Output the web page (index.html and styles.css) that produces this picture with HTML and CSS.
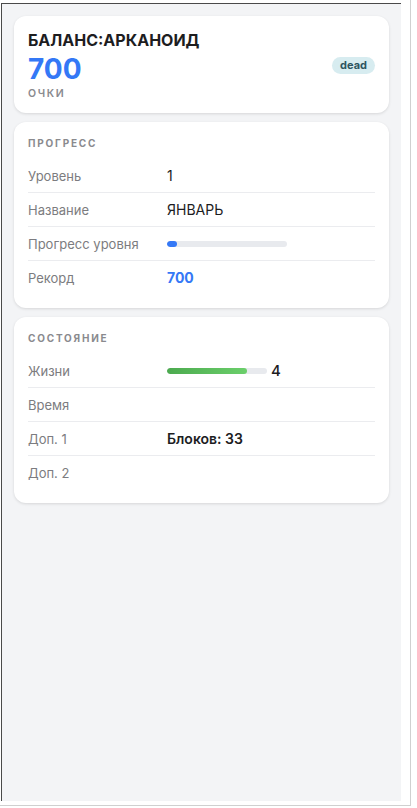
FILE: index.html
```html
<!DOCTYPE html>
<html lang="ru">
<head>
    <meta charset="UTF-8">
    <meta name="viewport" content="width=device-width, initial-scale=1.0">
    <title>Баланс: Арканоид</title>
    <link rel="stylesheet" href="styles.css">
</head>
<body>
    <div class="frame">
        <div class="screen">
            <!-- Шапка -->
            <div class="card hero">
                <div class="hero-main">
                    <div class="hero-title">БАЛАНС:АРКАНОИД</div>
                    <div class="hero-score">700</div>
                    <div class="hero-caption">ОЧКИ</div>
                </div>
                <span class="badge">dead</span>
            </div>

            <!-- Прогресс -->
            <div class="card">
                <div class="section-title">ПРОГРЕСС</div>
                <div class="row">
                    <span class="label">Уровень</span>
                    <span class="value">1</span>
                </div>
                <div class="row">
                    <span class="label">Название</span>
                    <span class="value">ЯНВАРЬ</span>
                </div>
                <div class="row">
                    <span class="label">Прогресс уровня</span>
                    <span class="value">
                        <span class="bar"><span class="bar-fill blue" style="width: 8%"></span></span>
                    </span>
                </div>
                <div class="row">
                    <span class="label">Рекорд</span>
                    <span class="value accent">700</span>
                </div>
            </div>

            <!-- Состояние -->
            <div class="card">
                <div class="section-title">СОСТОЯНИЕ</div>
                <div class="row">
                    <span class="label">Жизни</span>
                    <span class="value">
                        <span class="bar short"><span class="bar-fill green" style="width: 80%"></span></span>
                        <span class="lives">4</span>
                    </span>
                </div>
                <div class="row">
                    <span class="label">Время</span>
                    <span class="value"></span>
                </div>
                <div class="row">
                    <span class="label">Доп. 1</span>
                    <span class="value strong">Блоков: 33</span>
                </div>
                <div class="row">
                    <span class="label">Доп. 2</span>
                    <span class="value"></span>
                </div>
            </div>
        </div>
    </div>
</body>
</html>
```

FILE: styles.css
```css
:root {
    --bg-color: #f3f4f6;
    --card-bg: #ffffff;
    --accent: #3478f6;
    --text: #1d1d1f;
    --muted: #7c7c80;
    --line: #ebecef;
}

body {
    margin: 0;
    background: #fff;
    font-family: Inter, 'Noto Sans', sans-serif;
    color: var(--text);
}

/* Рамка окна */
.frame {
    width: 411px;
    height: 806px;
    padding-top: 3px;
    border-right: 1px solid #d0d0d0;
    border-bottom: 1px solid #d0d0d0;
    box-sizing: border-box;
}

.screen {
    margin-left: 1px;
    width: 400px;
    height: 798px;
    border-top: 1px solid #4a4a4a;
    border-left: 1px solid #4a4a4a;
    background: var(--bg-color);
    padding: 12px 12px;
    box-sizing: border-box;
    display: flex;
    flex-direction: column;
    gap: 9px;
}

/* Карточки */
.card {
    background: var(--card-bg);
    border-radius: 12px;
    box-shadow: 0 1px 3px rgba(0, 0, 0, 0.12);
    padding: 14px 14px;
}

.hero {
    display: flex;
    align-items: center;
    justify-content: space-between;
    padding-bottom: 12px;
}

.hero-title {
    font-size: 16px;
    font-weight: 700;
    line-height: 20px;
}

.hero-score {
    margin-top: 4px;
    font-size: 28px;
    font-weight: 700;
    line-height: 31px;
    color: var(--accent);
}

.hero-caption {
    margin-top: 2px;
    font-size: 10.5px;
    font-weight: 600;
    line-height: 14px;
    letter-spacing: 1.6px;
    color: #8a8a8e;
}

.badge {
    background: #d7ecf0;
    color: #2d5560;
    font-size: 11px;
    font-weight: 700;
    line-height: 17px;
    padding: 0 8px;
    border-radius: 9px;
}

/* Секции */
.section-title {
    font-size: 10px;
    font-weight: 700;
    line-height: 14px;
    letter-spacing: 1.8px;
    color: #8a8a8e;
    margin-bottom: 9px;
}

.row {
    display: flex;
    align-items: center;
    padding: 9px 0 8px;
    line-height: 16px;
    border-bottom: 1px solid var(--line);
}

.row:last-child {
    border-bottom: none;
}

.label {
    width: 139px;
    font-size: 13px;
    color: var(--muted);
}

.value {
    display: flex;
    align-items: center;
    gap: 4px;
    font-size: 14px;
    min-height: 16px;
}

.value.accent {
    color: var(--accent);
    font-weight: 700;
}

.value.strong {
    font-weight: 600;
}

/* Полоски */
.bar {
    display: block;
    width: 120px;
    height: 6px;
    background: #e8eaee;
    border-radius: 3px;
    overflow: hidden;
}

.bar.short {
    width: 100px;
}

.bar-fill {
    display: block;
    height: 100%;
    border-radius: 3px;
}

.bar-fill.blue {
    background: var(--accent);
}

.bar-fill.green {
    background: linear-gradient(90deg, #4caa4f, #6bcf6b);
}

.lives {
    font-size: 15px;
    font-weight: 500;
}
```
